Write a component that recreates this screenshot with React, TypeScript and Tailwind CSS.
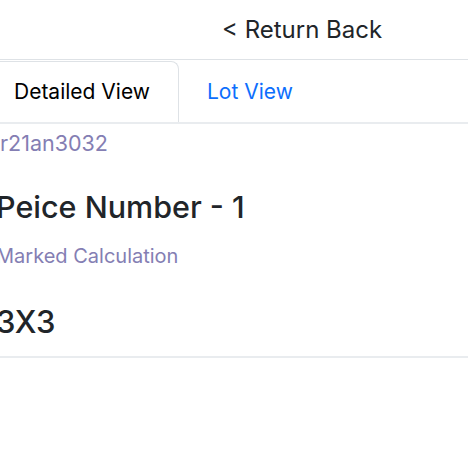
import React, { useState } from 'react';

export default function App() {
  const [tab, setTab] = useState<'detail' | 'lot'>('detail');

  return (
    <div className="w-[468px] h-[468px] overflow-hidden bg-white text-[#212529]" style={{ fontFamily: 'Inter, "Noto Sans", sans-serif' }}>
      {/* Header */}
      <div className="h-[60px] flex items-center pl-[222px] border-b border-[#dee2e6]">
        <button className="text-[24px] leading-none text-[#212529]">&lt; Return Back</button>
      </div>

      {/* Tabs */}
      <div className="flex h-[64px] border-b-2 border-[#e9ecef] -ml-[16px] pt-[1px]">
        <button
          onClick={() => setTab('detail')}
          className={`pl-[29px] pr-[28px] text-[21px] rounded-t-[8px] border border-b-0 ${tab === 'detail' ? 'border-[#dee2e6] text-[#000]' : 'border-transparent text-[#0d6efd]'}`}
        >
          Detailed View
        </button>
        <button
          onClick={() => setTab('lot')}
          className={`pl-[27px] pr-[28px] text-[21px] rounded-t-[8px] border border-b-0 ${tab === 'lot' ? 'border-[#dee2e6] text-[#000]' : 'border-transparent text-[#0d6efd]'}`}
        >
          Lot View
        </button>
      </div>

      {/* Details */}
      <div className="flex flex-col -ml-[4px] border-b-2 border-[#e9ecef] pb-[12px]">
        <div className="pl-[4px] mt-[5px] text-[21.5px] leading-[28px] text-[#847eb3]">r21an3032</div>
        <div className="mt-[30px] text-[30.5px] leading-[40px] font-medium">Peice Number - 1</div>
        <div className="mt-[16px] text-[20px] leading-[26px] text-[#847eb3]">Marked Calculation</div>
        <div className="mt-[31px] text-[31px] leading-[44px] font-medium">3X3</div>
      </div>
    </div>
  );
}
